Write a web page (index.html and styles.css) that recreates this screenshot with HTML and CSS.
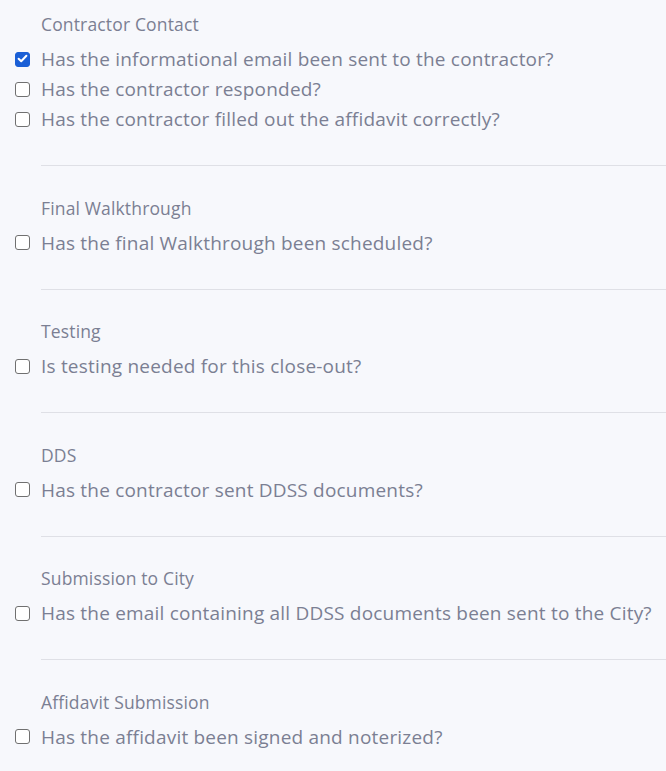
FILE: index.html
```html
<!DOCTYPE html>
<html>
<head>
<meta charset="utf-8">
<link rel="stylesheet" href="styles.css">
</head>
<body>
<div class="list">
  <section class="group">
    <div class="title">Contractor Contact</div>
    <div class="item"><span class="box checked"><svg viewBox="0 0 15 15" width="15" height="15"><path d="M3.6 7.8 L6.2 10.3 L11.4 4.8" fill="none" stroke="#fff" stroke-width="2" stroke-linecap="round" stroke-linejoin="round"/></svg></span><span>Has the informational email been sent to the contractor?</span></div>
    <div class="item"><span class="box"></span><span>Has the contractor responded?</span></div>
    <div class="item"><span class="box"></span><span>Has the contractor filled out the affidavit correctly?</span></div>
  </section>
  <section class="group">
    <div class="title">Final Walkthrough</div>
    <div class="item"><span class="box"></span><span>Has the final Walkthrough been scheduled?</span></div>
  </section>
  <section class="group">
    <div class="title">Testing</div>
    <div class="item"><span class="box"></span><span>Is testing needed for this close-out?</span></div>
  </section>
  <section class="group">
    <div class="title">DDS</div>
    <div class="item"><span class="box"></span><span>Has the contractor sent DDSS documents?</span></div>
  </section>
  <section class="group">
    <div class="title">Submission to City</div>
    <div class="item"><span class="box"></span><span>Has the email containing all DDSS documents been sent to the City?</span></div>
  </section>
  <section class="group last">
    <div class="title">Affidavit Submission</div>
    <div class="item"><span class="box"></span><span>Has the affidavit been signed and noterized?</span></div>
  </section>
</div>
</body>
</html>
```
FILE: styles.css
```css
html, body {
  margin: 0;
  padding: 0;
  background: #f7f8fc;
}
body {
  font-family: "Open Sans", "Noto Sans", sans-serif;
  color: #7b7f93;
}
.list {
  padding-top: 12px;
}
.group {
  padding-bottom: 31px;
  margin-bottom: 29.5px;
  border-bottom: 1px solid #dfe0e6;
  margin-left: 41px;
}
.group.last {
  border-bottom: none;
}
.title {
  font-size: 17.5px;
  letter-spacing: 0.15px;
  line-height: 24px;
  margin-bottom: 8px;
}
.item {
  display: flex;
  align-items: center;
  margin-left: -41px;
  font-size: 19px;
  letter-spacing: 0.2px;
  line-height: 30px;
  height: 30px;
}
.box {
  box-sizing: border-box;
  flex: none;
  width: 15px;
  height: 15px;
  margin: 0 11px 0 15px;
  border: 1.5px solid #707070;
  border-radius: 3px;
  background: #fff;
  position: relative;
}
.box.checked {
  background: #1a5fd6;
  border-color: #1a5fd6;
}
.box svg {
  position: absolute;
  left: -1.5px;
  top: -1.5px;
}
```
